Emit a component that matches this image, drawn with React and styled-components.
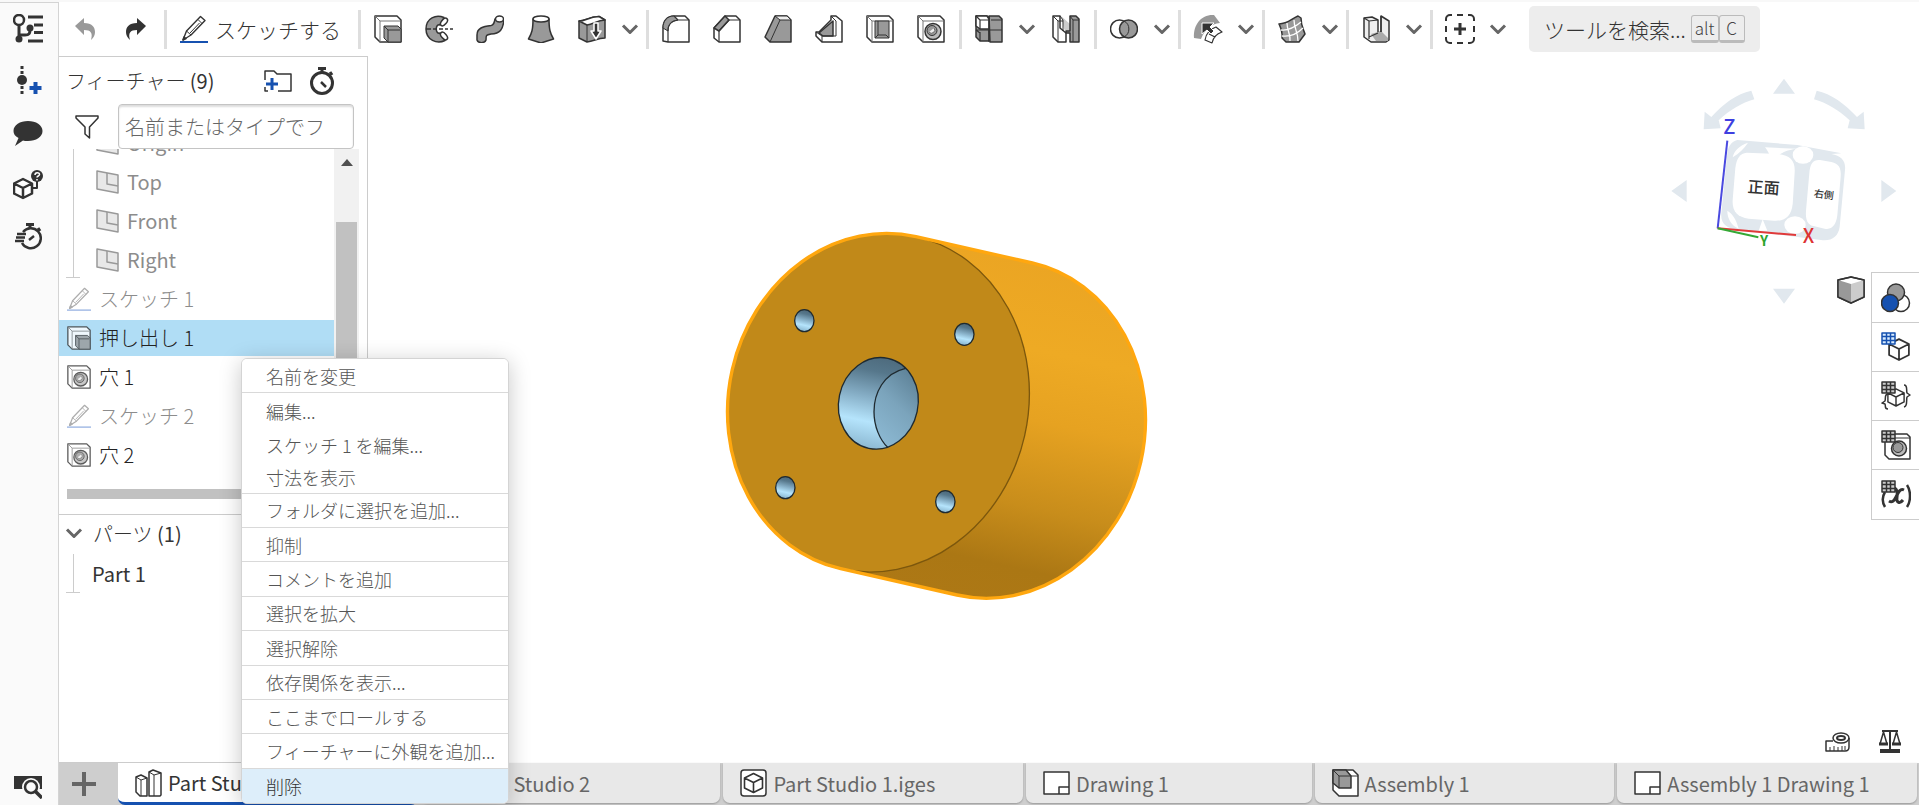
import React, { useState } from "react";
import styled, { createGlobalStyle, css } from "styled-components";

const GlobalStyle = createGlobalStyle`
    * {
        box-sizing: border-box;
    }
    body {
        margin: 0;
        background: #fff;
        color: #333;
        font-family: "Noto Sans CJK JP", "Noto Sans", sans-serif;
        font-weight: 300;
        font-size: 20px;
    }
    button, input {
        font: inherit;
        color: inherit;
    }
    button {
        padding: 0;
        border: 0;
        background: none;
        cursor: pointer;
    }
    svg {
        display: block;
        flex: none;
    }
`;

//LAYOUT
const Page = styled.div`
    position: relative;
    display: flex;
    height: 100vh;
    border-top: 2px solid #f8f8f8;
    overflow: hidden;
`;

const Rail = styled.nav`
    display: flex;
    flex-direction: column;
    flex: none;
    width: 59px;
    background: #fafafa;
    border-top: 1px solid #d4d4d4;
    border-right: 1px solid #d4d4d4;
`;

const RailButton = styled.button`
    display: flex;
    align-items: center;
    justify-content: center;
    height: 52px;
    padding-right: 2px;
    ${(props) => props.$last && css`
        margin-top: auto;
        height: 36px;
    `}
`;

const Main = styled.main`
    display: flex;
    flex-direction: column;
    flex: 1;
    min-width: 0;
`;

const Workspace = styled.div`
    display: flex;
    flex: 1;
    min-height: 0;
`;

//TOOLBAR
const Toolbar = styled.header`
    display: flex;
    align-items: center;
    flex: none;
    height: 54px;
`;

const Group = styled.div`
    display: flex;
    align-items: center;
    height: 39px;
    padding: 0 3px 0 1px;
    border-left: 3px solid #dedede;
`;

const ToolButton = styled.button`
    display: flex;
    align-items: center;
    justify-content: center;
    width: 51px;
    height: 39px;
`;

const CaretButton = styled(ToolButton)`
    width: 26px;
`;

const SketchButton = styled.button`
    display: flex;
    align-items: center;
    gap: 7px;
    width: 187px;
    padding-left: 12px;
    font-size: 21px;
    line-height: 36px;
    white-space: nowrap;
`;

const History = styled.div`
    display: flex;
    width: 105px;
`;

const SearchTools = styled.button`
    display: flex;
    align-items: center;
    gap: 5px;
    height: 46px;
    margin-left: 15px;
    padding: 0 15px;
    border-radius: 5px;
    background: #ededed;
    font-size: 21px;
    white-space: nowrap;
`;

const Keys = styled.span`
    display: flex;
`;

const Key = styled.kbd`
    min-width: 26px;
    padding: 0 3px;
    border: 1px solid #bbb;
    border-bottom-width: 3px;
    border-radius: 3px;
    font-family: inherit;
    font-size: 17px;
    line-height: 24px;
    text-align: center;
    color: #444;
`;

//FEATURE PANEL
const Panel = styled.aside`
    display: flex;
    flex-direction: column;
    flex: none;
    width: 309px;
    border: 1px solid #ccc;
    border-left: 0;
`;

const PanelHead = styled.div`
    display: flex;
    align-items: center;
    height: 47px;
    padding: 0 33px 0 7px;
`;

const PanelTitle = styled.h2`
    flex: 1;
    margin: 0;
    font-size: 20px;
    line-height: 30px;
    font-weight: 300;
`;

const Count = styled.span`
    font-weight: 400;
`;

const IconButton = styled.button`
    display: flex;
    margin-left: 18px;
`;

const FilterRow = styled.div`
    display: flex;
    align-items: center;
    gap: 19px;
    padding: 0 13px 0 16px;
`;

const FilterInput = styled.input`
    flex: 1;
    min-width: 0;
    height: 45px;
    padding: 0 30px 0 6px;
    border: 1px solid #c4c4c4;
    border-radius: 4px;
    background: #fff;
    box-shadow: inset 0 2px 2px #ddd;
    &::placeholder {
        color: #666;
        opacity: 1;
    }
`;

const ListArea = styled.div`
    display: flex;
    height: 340px;
    overflow: hidden;
`;

const FeatureList = styled.ul`
    display: flex;
    flex-direction: column;
    justify-content: flex-end;
    gap: 3px;
    flex: 1;
    margin: 0;
    padding: 0 0 16px;
    list-style: none;
`;

const Planes = styled.ul`
    display: flex;
    flex-direction: column;
    gap: 3px;
    margin: 0 0 0 7px;
    padding: 0;
    list-style: none;
    background:
        linear-gradient(#ccc, #ccc) 7px 0 / 1px 100% no-repeat,
        linear-gradient(#ccc, #ccc) 0 100% / 14px 1px no-repeat;
`;

const Feature = styled.button`
    display: flex;
    align-items: center;
    gap: 8px;
    width: 100%;
    height: 36px;
    padding-left: ${(props) => (props.$nested ? "30px" : "8px")};
    background: ${(props) => (props.$active ? "#b0ddf5" : "none")};
    color: ${(props) => (props.$dim ? "#8c8c8c" : "#222")};
    font-weight: ${(props) => (props.$nested ? 400 : 300)};
    line-height: 36px;
    text-align: left;
    white-space: nowrap;
`;

const ScrollTrack = styled.div`
    display: flex;
    flex-direction: column;
    align-items: center;
    gap: 56px;
    width: 25px;
    margin-right: 8px;
    padding-top: 10px;
    background: #f1f1f1;
`;

const ScrollThumb = styled.div`
    flex: 1;
    width: 21px;
    background: #c1c1c1;
`;

const RollbackBar = styled.div`
    height: 10px;
    margin: 0 33px 15px 8px;
    background: #c1c1c1;
`;

const Parts = styled.section`
    border-top: 1px solid #ccc;
    padding: 0 6px;
`;

const PartsToggle = styled.button`
    display: flex;
    align-items: center;
    gap: 10px;
    height: 36px;
    margin-bottom: 3px;
`;

const PartRow = styled.div`
    height: 39px;
    padding-left: 27px;
    font-weight: 400;
    line-height: 39px;
    background:
        linear-gradient(#ccc, #ccc) 8px 0 / 1px 100% no-repeat,
        linear-gradient(#ccc, #ccc) 1px 100% / 14px 1px no-repeat;
`;

//CANVAS
const Canvas = styled.section`
    position: relative;
    display: flex;
    flex-direction: column;
    align-items: flex-end;
    flex: 1;
    min-width: 0;
`;

const Model = styled.svg`
    position: absolute;
    left: 332px;
    top: 154px;
`;

const DockRow = styled.div`
    display: flex;
    align-items: flex-start;
    gap: 6px;
`;

const CubeButton = styled.button`
    padding-top: 4px;
`;

const Dock = styled.div`
    display: flex;
    flex-direction: column;
    width: 48px;
    border: 1px solid #ccc;
    border-width: 1px 0 0 1px;
    background: #fff;
`;

const DockButton = styled.button`
    display: flex;
    align-items: center;
    justify-content: center;
    height: 49px;
    border-bottom: 1px solid #ccc;
    &:last-child, &:first-child {
        height: 50px;
    }
`;

const Measure = styled.div`
    display: flex;
    align-items: center;
    gap: 11px;
    margin-top: auto;
    padding: 0 18px 10px 0;
`;

//TABS
const TabBar = styled.footer`
    display: flex;
    flex: none;
    gap: 3px;
    height: 42px;
    padding-right: 2px;
    background: #cecece;
`;

const AddTab = styled.button`
    display: flex;
    align-items: center;
    justify-content: center;
    width: 56px;
    padding-right: 6px;
`;

const Tab = styled.button`
    display: flex;
    align-items: center;
    gap: 6px;
    flex: ${(props) => props.$grow} 1 0;
    min-width: 0;
    height: 40px;
    padding-left: 17px;
    border-radius: 0 0 7px 7px;
    background: #e8e8e8;
    box-shadow: 0 1px 2px #999;
    color: #666;
    font-weight: 400;
    white-space: nowrap;
    ${(props) => props.$active && css`
        height: 42px;
        border-bottom: 3px solid #1651b0;
        background: #fff;
        color: #333;
        box-shadow: none;
    `}
`;

//CONTEXT MENU
const Menu = styled.div`
    position: absolute;
    left: 241px;
    top: 356px;
    bottom: 1px;
    width: 268px;
    display: flex;
    flex-direction: column;
    border: 1px solid #d4d4d4;
    border-radius: 6px;
    background: #fff;
    box-shadow: 0 4px 22px rgba(0, 0, 0, 0.22);
    overflow: hidden;
`;

const MenuItem = styled.button`
    flex: 1 0 ${(props) => (props.$tight ? "31px" : "34px")};
    padding-left: 24px;
    border-bottom: ${(props) => (props.$line ? "1px solid #d9d9d9" : "0")};
    background: ${(props) => (props.$active ? "#ddeefa" : "#fff")};
    color: ${(props) => (props.$active ? "#333" : "#555")};
    font-size: 18px;
    line-height: 30px;
    text-align: left;
    white-space: nowrap;
`;

//ICONS
const dark = "#333";
const mid = "#999";

function Icon({ size = 28, width, height, box, children }) {
    return (
        <svg
            width={width || size}
            height={height || size}
            viewBox={box || `0 0 ${width || size} ${height || size}`}
            fill="none"
            stroke={dark}
            strokeWidth="1.5"
            strokeLinejoin="round"
            aria-hidden="true"
        >
            {children}
        </svg>
    );
}

const Chevron = () => (
    <Icon width={18} height={12}>
        <path d="M2 2.5l7 7 7-7" stroke="#666" strokeWidth="3" />
    </Icon>
);

const Block = ({ children }) => (
    <>
        <path d="M1 1h22l4 4v22H6l-5-5z" fill="#fff" />
        <path d="M1 1l5 5v21M6 6h20" stroke="#777" strokeWidth="1" />
        {children}
    </>
);

const Extrude = () => (
    <Icon>
        <Block>
            <path d="M10 11h14l3 3v13H14l-4-4z" fill={mid} strokeWidth="1" />
            <path d="M10 11l4 4v12M14 15h12" strokeWidth="1" />
        </Block>
    </Icon>
);

const Hole = () => (
    <Icon>
        <Block>
            <circle cx="16" cy="16.500" r="8" fill="#bbb" />
            <circle cx="15" cy="15.500" r="5" fill={mid} strokeWidth="1" />
            <path d="M12 17a3 3 0 0 0 5-4" fill="#eee" stroke="#666" strokeWidth="1" />
        </Block>
    </Icon>
);

const Pencil = ({ color = dark, line = "#1651b0", size = 28 }) => (
    <Icon size={size} box="0 0 28 28">
        <path d="M3 25l3.500-9L20.500 1.500l4.500 4L11 20z" stroke={color} strokeWidth="1.400" />
        <path d="M6.500 16l4.500 4M18 4.500l4 4M10 18l9.500-10" stroke={color} strokeWidth="1" />
        <path d="M3 25l1-3 2 1.500z" fill={color} stroke={color} />
        <path d="M0 27h28" stroke={line} strokeWidth="2" />
    </Icon>
);

const Plane = () => (
    <Icon width={23} height={24}>
        <path d="M1 1l21 4v18L1 19z" fill="#e8e8e8" stroke="#999" />
        <path d="M11 3v11l11 2" stroke="#999" />
    </Icon>
);

const Revolve = () => (
    <Icon>
        <path d="M19 2.500C11-1 1 3 1 14s11 15.500 19 11.500L15 18c-5 1.500-5-9.500 0-8z" fill={mid} />
        <ellipse cx="19" cy="7" rx="2.500" ry="4.500" transform="rotate(40 19 7)" fill="#fff" />
        <ellipse cx="19" cy="21" rx="2.500" ry="4.500" transform="rotate(-40 19 21)" fill="#fff" />
        <path d="M1 14h5M8 14h4M14 14h4M20 14h3M25 14h3" />
    </Icon>
);

const Sweep = () => (
    <Icon>
        <path d="M19 4c-1 4-1 6-4 6.500C7 11.500 1 13 1 20v5c1 3.500 8 3.500 9 0 0-5 0-5 5-6 9-.500 12-4 13-15z" fill={mid} />
        <ellipse cx="23.500" cy="4" rx="4" ry="3" fill="#fff" />
    </Icon>
);

const Loft = () => (
    <Icon>
        <path d="M6 4c0 10-1 14-4.500 20L14 28l12.500-4C23 18 22 14 22 4z" fill={mid} />
        <ellipse cx="14" cy="4" rx="8" ry="3" fill="#fff" />
    </Icon>
);

const Thicken = () => (
    <Icon>
        <path d="M1 6c7 0 9-4 20-4.500l6 3.500v18c-8 0-11 3.500-18 4l-8-4z" fill={mid} />
        <path d="M1 6c7 0 9-4 20-4.500l6 3.500c-8 0-11 4-18 5z" fill="#fff" />
        <path d="M9 10v17" strokeWidth="1" />
        <path d="M16 8v8h-3l5 8 5-8h-3V8z" fill={dark} stroke="#fff" />
    </Icon>
);

const Fillet = () => (
    <Icon>
        <path d="M1 26V13C1 6 5 1 12 1h11l4 4v22H6z" fill="#fff" />
        <path d="M1 13C1 6 5 1 12 1l4 4C9 6 6 9 6 16z" fill={mid} strokeWidth="1" />
        <path d="M6 27V16C6 9 9 6 16 5h11M12 1l4 4" strokeWidth="1.200" />
    </Icon>
);

const Chamfer = () => (
    <Icon>
        <path d="M1 23V13L12 1h11l4 4v22H6z" fill="#fff" />
        <path d="M1 13L12 1l4 4L6 16z" fill={mid} />
        <path d="M6 27V16L16 5h11" strokeWidth="1.200" />
    </Icon>
);

const Draft = () => (
    <Icon>
        <path d="M1 22L11 1h12l4 4v22H6z" fill={mid} />
        <path d="M11 1l5 4h11l-4-4z" fill="#eee" strokeWidth="1" />
        <path d="M16 5L6 27" strokeWidth="1" />
    </Icon>
);

const Rib = () => (
    <Icon>
        <path d="M1 17h3L16 5V1h5l6 5v21H7l-6-6z" fill="#fff" />
        <path d="M4 18L18 6v15H8z" fill={mid} />
        <path d="M16 1l5 5v15H7l-6-4M7 21v6" strokeWidth="1" />
    </Icon>
);

const Shell = () => (
    <Icon>
        <Block>
            <path d="M9 6h14v17H9z" fill={mid} strokeWidth="1" />
            <path d="M9 23l3-3V6M23 23l-3-3h-8" strokeWidth="1" />
        </Block>
    </Icon>
);

const Pattern = () => (
    <Icon>
        <path d="M1 1h11l2 2v23H5l-4-4z" fill={mid} />
        <path d="M14 1h10l3 3v23H15z" fill={mid} />
        <path d="M1 1h11l2 3v10H5l-4-3z" fill="#fff" />
        <path d="M1 15h26M14 1v26M5 5v9M5 5h9M5 17v9M16 5h11M1 1l4 4M1 15l4 3" strokeWidth="1.200" />
    </Icon>
);

const Mirror = () => (
    <Icon>
        <path d="M9 1l9 8v11l-6-6z" fill="#ccc" stroke="none" />
        <path d="M1 1h7v12l6 5v9H6l-5-5z" fill="#fff" />
        <path d="M1 1l5 5v21M8 1l3 4v11M6 6h5" strokeWidth="1" />
        <path d="M18 1h6l3 3v23h-9v-9h-4v-2h4z" fill={mid} />
        <path d="M18 1l3 4v22M21 5h6" strokeWidth="1" />
    </Icon>
);

const Boolean2 = () => (
    <Icon>
        <circle cx="9.500" cy="14" r="9" fill="#fff" />
        <circle cx="18.500" cy="14" r="9" fill={mid} />
        <path d="M14 6a9 9 0 0 1 0 16" strokeWidth="1" />
    </Icon>
);

const MoveFace = () => (
    <Icon size={30}>
        <path d="M1 24C0 10 9 0 21 1l6 8c-9 1-15 6-19 16z" fill={mid} stroke="none" />
        <path d="M23 13l6 5c-6 2-9 6-10 11l-7-3c1-6 5-11 11-13zM16 20l6 3" fill="#fff" strokeWidth="1.200" />
        <path d="M9 9h12l-4 4 4 4-3 3-4-4-5 4z" fill={dark} stroke="#fff" strokeWidth="1" />
    </Icon>
);

const Surface = () => (
    <Icon>
        <path d="M1 9c9 0 12-5 19-8l3 2c0 8 2 10 4 16l-6 8H8l-4-4c1-7-1-10-3-14z" fill={mid} />
        <path d="M3 15c8 1 14-3 20-8M4 21c8 1 15-2 21-8M9 8c0 8 4 12 3 18M16 5c0 8 4 12 4 21" stroke="#fff" strokeWidth="1.300" />
    </Icon>
);

const SheetMetal = () => (
    <Icon>
        <path d="M2 3l8-1 6 3v13l3-1V1l8 5v19l-3 2H9l-7-5z" fill="#eee" />
        <path d="M9 19l7-2h4l6 6v3H14z" fill="#aaa" stroke="none" />
        <path d="M2 3l5 3v18M7 6l9-1M7 22l9-4M19 1v16" strokeWidth="1.200" />
    </Icon>
);

const AddCustom = () => (
    <Icon size={30}>
        <path d="M1 7V5a4 4 0 0 1 4-4h2M12 1h6M23 1h2a4 4 0 0 1 4 4v2M29 12v6M29 23v2a4 4 0 0 1-4 4h-2M18 29h-6M7 29H5a4 4 0 0 1-4-4v-2M1 18v-6" strokeWidth="2" />
        <path d="M15 9v12M9 15h12" strokeWidth="3" />
    </Icon>
);

const Undo = ({ flip }) => (
    <Icon width={20} height={22}>
        <path
            d="M0 8l9-8v5c8 0 11 4 11 9 0 3-1 5-4 8 2-7 0-10-7-10v5z"
            transform={flip ? "translate(20 0) scale(-1 1)" : undefined}
            fill={flip ? dark : mid}
            stroke="none"
        />
    </Icon>
);

const Stopwatch = ({ lines }) => (
    <Icon width={lines ? 28 : 24} height={28} box={lines ? "-4 0 28 28" : "0 0 24 28"}>
        {lines ? (
            <path d="M5 9a10 10 0 1 1-1 11M-1 11h9M-2 14.500h9M-3 18h9" strokeWidth="2.500" />
        ) : (
            <circle cx="12" cy="16" r="10.500" strokeWidth="3" />
        )}
        <path d="M8 1.500h8M12 2v4M20 5l2 3" strokeWidth="3" />
        <path d={lines ? "M11 17l5-4" : "M11 15l5 5"} strokeWidth="2.500" />
    </Icon>
);

const VersionTree = () => (
    <Icon size={30}>
        <circle cx="6" cy="6" r="5" strokeWidth="2.500" />
        <path d="M6 11v14M6 21h6c4 0 5-1 5-6" strokeWidth="3" />
        <circle cx="6" cy="25" r="3.500" fill={dark} stroke="none" />
        <circle cx="17" cy="14" r="3.500" fill={dark} stroke="none" />
        <path d="M15 3h15M21 11h9M21 18.500h9M15 27h15" strokeWidth="3" />
    </Icon>
);

const AddVersion = () => (
    <Icon width={30} height={30}>
        <path d="M9 0v28" strokeWidth="3" strokeDasharray="3 2" />
        <circle cx="9" cy="14" r="5" fill={dark} stroke="none" />
        <path d="M22.500 16v12M16.500 22h12" stroke="#1651b0" strokeWidth="4" />
    </Icon>
);

const Comment = () => (
    <Icon width={30} height={28}>
        <path d="M15 2c8 0 14.500 4 14.500 10S23 22 15 22c-2 0-4 0-5-.500L2 27l3.500-8C2 17 .500 15 .500 12 .500 6 7 2 15 2z" fill={dark} stroke="none" />
    </Icon>
);

const CubeShape = ({ x = 0, y = 0, s = 1, sw = 2 }) => (
    <path
        d="M10 1l9 4.500v10L10 20l-9-4.500v-10zM1 5.500l9 4.500 9-4.500M10 10v10"
        transform={`translate(${x} ${y}) scale(${s})`}
        fill="#fff"
        strokeWidth={sw}
    />
);

const CubeHelp = () => (
    <Icon size={30}>
        <CubeShape x={0} y={8} sw={2.5} />
        <path d="M20 18h4v-8" strokeWidth="2" />
        <circle cx="24" cy="6" r="6" fill={dark} stroke="none" />
        <path d="M22 5c0-3 4.500-3 4.500-.500 0 1.500-2.500 1.500-2.500 3M24 9v1.500" stroke="#fff" />
    </Icon>
);

const TableSearch = () => (
    <Icon width={28} height={24}>
        <path d="M0 1h28v13H0z" fill={dark} stroke="none" />
        <circle cx="17" cy="12" r="9" fill="#fafafa" stroke="none" />
        <circle cx="17" cy="12" r="6" strokeWidth="2.500" />
        <path d="M21 16l7 7" strokeWidth="3.500" />
    </Icon>
);

const FolderPlus = () => (
    <Icon width={28} height={22}>
        <path d="M1 10V1h9l3 3h14v17H14M1 17v4h3" />
        <path d="M8 8v12M2 14h12" stroke="#1651b0" strokeWidth="3" />
    </Icon>
);

const Funnel = () => (
    <Icon width={24} height={24}>
        <path d="M1 1h22v2l-8.500 9v11l-4.500-4v-7L1 3z" />
    </Icon>
);

const PartStudioIcon = () => (
    <Icon width={27} height={28}>
        <path d="M1 8l5-2 6 3v18H5l-4-4zM14 3l4-2 8 3v22l-1 1H14z" fill="#fff" />
        <path d="M1 8l5 3 6-2M6 11v16M14 3l5 3 7-2M19 6v21" strokeWidth="1" />
    </Icon>
);

const ImportIcon = () => (
    <Icon width={27} height={28}>
        <rect x="1" y="1" width="25" height="26" rx="3" fill="#fff" />
        <CubeShape x={3.5} y={3.5} sw={1.6} />
    </Icon>
);

const DrawingIcon = () => (
    <Icon width={27} height={24}>
        <path d="M1 1h25v22H1zM16 23v-7h10" fill="#fff" />
    </Icon>
);

const AssemblyIcon = () => (
    <Icon width={27} height={28}>
        <path d="M1 1h20l5 5v21H7l-6-6z" fill="#fff" />
        <path d="M1 1h13l5 6v12H7l-6-5z" fill={mid} />
        <path d="M1 1l6 6v12M7 7h19" strokeWidth="1" />
    </Icon>
);

const TinyTable = ({ blue }) => (
    <>
        <path
            d="M1 1h13v11H1z"
            fill={blue ? "#d8ecff" : "#ccc"}
            stroke={blue ? "#1651b0" : dark}
        />
        <path d="M1 4.500h13M1 8.500h13M5.500 1v11M9.500 1v11" stroke={blue ? "#1651b0" : dark} />
    </>
);

const Appearance = () => (
    <Icon size={30}>
        <circle cx="20" cy="20" r="8.500" fill="#fff" />
        <circle cx="15" cy="9.500" r="8.500" fill={mid} />
        <circle cx="9" cy="20" r="8.500" fill="#1651b0" />
    </Icon>
);

const DockCube = () => (
    <Icon size={30}>
        <CubeShape x={7} y={6} s={1.1} sw={1.6} />
        <TinyTable blue />
    </Icon>
);

const DockBraces = () => (
    <Icon size={30}>
        <CubeShape x={6} y={7} s={0.9} sw={1.6} />
        <path d="M7 13c-4 0-2 5-3 7l-3 2 3 1c1 2-1 5 3 5M23 4c4 0 2 5 3 8l3 2-3 2c-1 3 1 9-3 10" />
        <TinyTable />
    </Icon>
);

const DockHole = () => (
    <Icon size={30}>
        <path d="M4 4h22l3 3v22H8l-4-4z" fill="#fff" />
        <path d="M5 8h24" strokeWidth="1" />
        <circle cx="18" cy="18.500" r="7.500" fill="#bbb" />
        <circle cx="17" cy="17.500" r="5" fill={mid} strokeWidth="1" />
        <TinyTable />
    </Icon>
);

const DockVariable = () => (
    <Icon size={30}>
        <path d="M4 12c-3 5-3 10 0 15M26 5c4 6 4 16 0 22" strokeWidth="2.500" />
        <path d="M10 9c5-3 7 2 6 8s3 7 6 3M23 10c-4-2-6 3-8 7s-4 6-7 4" strokeWidth="3" />
        <TinyTable />
    </Icon>
);

const ShadedCube = () => (
    <Icon size={28}>
        <path d="M1 4l13-3 13 3v17l-13 6L1 21z" fill="#fff" />
        <path d="M1 4l13 4v19L1 21z" fill={mid} stroke="none" />
        <path d="M27 4L14 8v19l13-6z" fill="#ccc" stroke="none" />
        <path d="M1 4l13-3 13 3v17l-13 6L1 21z" />
    </Icon>
);

const Tape = () => (
    <Icon width={25} height={20}>
        <path d="M8 9H1v10h19c2 0 4-1 4-4V6" />
        <ellipse cx="16" cy="6" rx="8" ry="5" />
        <ellipse cx="16" cy="6" rx="4" ry="2" strokeWidth="2" />
        <path d="M5 19v-4M9 19v-5M13 19v-4M17 19v-5M20 18v-4" strokeWidth="1" />
    </Icon>
);

const Scales = () => (
    <Icon width={22} height={23}>
        <path d="M3 1h16M11 1v19" strokeWidth="2" />
        <path d="M4.500 2L1 14h7zM17.500 2L14 14h7z" />
        <path d="M0 14h9M13 14h9" strokeWidth="3" />
        <path d="M1 21h20" strokeWidth="4" />
    </Icon>
);

//MODEL
const mountingHoles = [[313, 332], [793, 373], [256, 833], [736, 875]];
const outline = "M648 80L997 159A440 500 12.800 0 1 771 1155L422 1076A440 500 12.800 0 1 648 80Z";

function Cylinder() {
    return (
        <Model width="480" height="410" viewBox="0 0 1440 1230" role="img" aria-label="Part 1">
            <defs>
                <linearGradient id="side" gradientUnits="userSpaceOnUse" x1="980" y1="150" x2="760" y2="1160">
                    <stop offset="0" stopColor="#eba523" />
                    <stop offset="0.25" stopColor="#eeaa24" />
                    <stop offset="0.45" stopColor="#e6a221" />
                    <stop offset="0.7" stopColor="#c88d1b" />
                    <stop offset="0.88" stopColor="#ab7714" />
                    <stop offset="1" stopColor="#ad7815" />
                </linearGradient>
                <linearGradient id="bore" x1="0.6" y1="0" x2="0.4" y2="1">
                    <stop offset="0" stopColor="#4b6779" />
                    <stop offset="0.2" stopColor="#56778b" />
                    <stop offset="0.45" stopColor="#84acc4" />
                    <stop offset="0.7" stopColor="#b5e4fc" />
                    <stop offset="1" stopColor="#86b2cc" />
                </linearGradient>
                <linearGradient id="boreEnd" x1="0.8" y1="0" x2="0.2" y2="1">
                    <stop offset="0" stopColor="#587b90" />
                    <stop offset="0.5" stopColor="#7ba4bc" />
                    <stop offset="1" stopColor="#8dbad4" />
                </linearGradient>
                <clipPath id="boreClip">
                    <ellipse cx="535" cy="580" rx="119" ry="138" transform="rotate(12 535 580)" />
                </clipPath>
            </defs>
            <path d={outline} fill="url(#side)" />
            <ellipse cx="535" cy="578" rx="450" ry="511" transform="rotate(12.8 535 578)" fill="#c18919" stroke="#7c570d" strokeWidth="4" />
            <path d={outline} fill="none" stroke="#ffa70f" strokeWidth="10" />
            {mountingHoles.map(([x, y]) => (
                <ellipse key={x} cx={x} cy={y} rx="29" ry="33" fill="url(#bore)" stroke="#1f2a30" strokeWidth="4" />
            ))}
            <g clipPath="url(#boreClip)">
                <path d="M400 430h280v300H400z" fill="url(#bore)" />
                <path d="M617 475C550 490 522 550 522 605C522 650 540 690 563 712L680 720V470Z" fill="url(#boreEnd)" stroke="#1f2a30" strokeWidth="4" />
            </g>
            <ellipse cx="535" cy="580" rx="119" ry="138" transform="rotate(12 535 580)" fill="none" stroke="#1f2a30" strokeWidth="4" />
        </Model>
    );
}

const CubeSvg = styled.svg`
    margin-top: 4px;
    overflow: visible;
    font-family: "Noto Sans CJK JP", sans-serif;
    font-weight: 500;
`;

function ViewCube() {
    return (
        <CubeSvg width="269" height="212" viewBox="0 0 807 636" role="img" aria-label="View cube">
            <g fill="#e1e8ee">
                <path d="M369 101l33-45 33 45zM369 686l33 45 33-45zM110 360v66l-46-33zM694 360v66l45-33z" />
                <path d="M304 92l9 26C275 128 240 150 206 181l6 24-51 3 3-53 20 16C220 130 260 102 304 92z" />
                <path d="M500 92l-8 26c38 10 73 32 107 63l-6 24 51 3-3-53-20 16C584 130 544 102 500 92z" />
                <path d="M262 240l180 15 132 25-30 2c30 6 44 20 41 48l-16 170c-4 30-24 44-56 40L260 508c-28-2-50-16-46-50l18-178c2-20 12-36 30-40z" />
            </g>
            <g fill="#fff">
                <path d="M290 278l96 4c34 4 50 20 48 54l-6 96c-4 36-22 52-56 50l-76-6c-34-4-50-22-48-56l8-96c4-30 14-44 34-46z" />
                <path d="M510 300l34 6c22 4 30 18 28 44l-10 116c-4 30-16 44-38 40l-34-8c-18-4-24-20-22-46l10-112c2-30 12-42 32-40z" />
                <ellipse cx="459" cy="285" rx="31" ry="26" />
                <ellipse cx="435" cy="495" rx="32" ry="26" />
                <path d="M248 292c4-18 18-34 46-44-12 18-26 32-46 44zM232 452c14 8 26 24 34 54-22-10-34-30-34-54zM326 512l12-34 14 34zM345 262l95 4c-30 4-40 10-52 18h-30c-4-10-8-16-13-22z" />
            </g>
            <path d="M232 242L203 505" stroke="#4a4ae0" strokeWidth="6" />
            <path d="M203 505l235 20" stroke="#e03a3a" strokeWidth="6" />
            <path d="M203 505l122 27" stroke="#35a835" strokeWidth="6" />
            <text x="220" y="221" fontSize="60" fill="#3f3fe0">Z</text>
            <text x="458" y="549" fontSize="58" fill="#dd3333">X</text>
            <text x="330" y="558" fontSize="42" fontWeight="700" fill="#2da52d">Y</text>
            <text x="293" y="400" fontSize="48" fill="#333" transform="rotate(4 340 380)">正面</text>
            <text x="492" y="414" fontSize="30" fill="#333" transform="rotate(8 520 400)">右側</text>
        </CubeSvg>
    );
}

//DATA
const toolGroups = [
    [["Extrude", Extrude], ["Revolve", Revolve], ["Sweep", Sweep], ["Loft", Loft], ["Thicken", Thicken], "more"],
    [["Fillet", Fillet], ["Chamfer", Chamfer], ["Draft", Draft], ["Rib", Rib], ["Shell", Shell], ["Hole", Hole]],
    [["Pattern", Pattern], "more", ["Mirror", Mirror]],
    [["Boolean", Boolean2], "more"],
    [["Move face", MoveFace], "more"],
    [["Surface", Surface], "more"],
    [["Sheet metal", SheetMetal], "more"],
    [["Custom features", AddCustom], "more"],
];

const railItems = [
    ["Versions", <VersionTree />],
    ["Create version", <AddVersion />],
    ["Comments", <Comment />],
    ["Help", <CubeHelp />],
    ["Performance", <Stopwatch lines />],
];

const features = [
    { name: "スケッチ 1", type: "sketch" },
    { name: "押し出し 1", type: "extrude" },
    { name: "穴 1", type: "hole" },
    { name: "スケッチ 2", type: "sketch" },
    { name: "穴 2", type: "hole" },
];

const menuItems = [
    { label: "名前を変更", line: true },
    { label: "編集..." },
    { label: "スケッチ 1 を編集..." },
    { label: "寸法を表示", line: true, tight: true },
    { label: "フォルダに選択を追加...", line: true },
    { label: "抑制", line: true },
    { label: "コメントを追加", line: true },
    { label: "選択を拡大", line: true },
    { label: "選択解除", line: true },
    { label: "依存関係を表示...", line: true },
    { label: "ここまでロールする", line: true },
    { label: "フィーチャーに外観を追加...", line: true },
    { label: "削除", active: true },
];

const tabs = [
    { name: "Part Studio 1", icon: <PartStudioIcon />, grow: 20 },
    { name: "Part Studio 2", icon: <PartStudioIcon />, grow: 20 },
    { name: "Part Studio 1.iges", icon: <ImportIcon />, grow: 20 },
    { name: "Drawing 1", icon: <DrawingIcon />, grow: 19 },
    { name: "Assembly 1", icon: <AssemblyIcon />, grow: 20 },
    { name: "Assembly 1 Drawing 1", icon: <DrawingIcon />, grow: 20 },
];

const dockItems = [
    ["Appearance", <Appearance />],
    ["Configurations", <DockCube />],
    ["Custom table", <DockBraces />],
    ["Hole table", <DockHole />],
    ["Variables", <DockVariable />],
];

const FeatureSvg = styled.span`
    display: flex;
    opacity: 0.8;
    svg {
        width: 24px;
        height: 24px;
    }
`;

function FeatureIcon({ type }) {
    return (
        <FeatureSvg>
            {type === "sketch" && <Pencil color="#999" line="#9db6e4" />}
            {type === "extrude" && <Extrude />}
            {type === "hole" && <Hole />}
        </FeatureSvg>
    );
}

function TopToolbar() {
    return (
        <Toolbar>
            <History>
                <ToolButton aria-label="Undo"><Undo /></ToolButton>
                <ToolButton aria-label="Redo"><Undo flip /></ToolButton>
            </History>
            <Group>
                <SketchButton><Pencil />スケッチする</SketchButton>
            </Group>
            {toolGroups.map((group, i) => (
                <Group key={i}>
                    {group.map((tool, j) => {
                        if (tool === "more") {
                            return <CaretButton key={j} aria-label="More tools"><Chevron /></CaretButton>;
                        }
                        const [name, ToolIcon] = tool;
                        return <ToolButton key={j} aria-label={name}><ToolIcon /></ToolButton>;
                    })}
                </Group>
            ))}
            <SearchTools>
                ツールを検索...
                <Keys><Key>alt</Key><Key>C</Key></Keys>
            </SearchTools>
        </Toolbar>
    );
}

function FeaturePanel() {
    const [selected, setSelected] = useState("押し出し 1");
    return (
        <Panel>
            <PanelHead>
                <PanelTitle>フィーチャー <Count>(9)</Count></PanelTitle>
                <IconButton aria-label="Add folder"><FolderPlus /></IconButton>
                <IconButton aria-label="Regeneration times"><Stopwatch /></IconButton>
            </PanelHead>
            <FilterRow>
                <Funnel />
                <FilterInput type="text" aria-label="Filter" placeholder="名前またはタイプでフィルター" />
            </FilterRow>
            <ListArea>
                <FeatureList>
                    <li>
                        <Planes>
                            {["Origin", "Top", "Front", "Right"].map((name) => (
                                <li key={name}>
                                    <Feature $nested $dim>
                                        <Plane />
                                        {name}
                                    </Feature>
                                </li>
                            ))}
                        </Planes>
                    </li>
                    {features.map(({ name, type }) => (
                        <li key={name}>
                            <Feature
                                $dim={type === "sketch"}
                                $active={selected === name}
                                onClick={() => setSelected(name)}
                            >
                                <FeatureIcon type={type} />
                                {name}
                            </Feature>
                        </li>
                    ))}
                </FeatureList>
                <ScrollTrack>
                    <Icon width={12} height={7}>
                        <path d="M0 7l6-7 6 7z" fill="#505050" stroke="none" />
                    </Icon>
                    <ScrollThumb />
                </ScrollTrack>
            </ListArea>
            <RollbackBar />
            <Parts>
                <PartsToggle><Chevron /><span>パーツ <Count>(1)</Count></span></PartsToggle>
                <PartRow>Part 1</PartRow>
            </Parts>
        </Panel>
    );
}

function App() {
    return (
        <>
            <GlobalStyle />
            <Page>
                <Rail>
                    {railItems.map(([name, icon]) => (
                        <RailButton key={name} aria-label={name}>{icon}</RailButton>
                    ))}
                    <RailButton $last aria-label="Search tables"><TableSearch /></RailButton>
                </Rail>
                <Main>
                    <TopToolbar />
                    <Workspace>
                        <FeaturePanel />
                        <Canvas>
                            <Cylinder />
                            <ViewCube />
                            <DockRow>
                                <CubeButton aria-label="View options"><ShadedCube /></CubeButton>
                                <Dock>
                                    {dockItems.map(([name, icon]) => (
                                        <DockButton key={name} aria-label={name}>{icon}</DockButton>
                                    ))}
                                </Dock>
                            </DockRow>
                            <Measure>
                                <IconButton aria-label="Measure"><Tape /></IconButton>
                                <IconButton aria-label="Mass properties"><Scales /></IconButton>
                            </Measure>
                        </Canvas>
                    </Workspace>
                    <TabBar>
                        <AddTab aria-label="Add tab">
                            <Icon size={24}>
                                <path d="M12 0v24M0 12h24" stroke="#666" strokeWidth="4" />
                            </Icon>
                        </AddTab>
                        {tabs.map(({ name, icon, grow }, i) => (
                            <Tab key={name} $grow={grow} $active={i === 0}>{icon}{name}</Tab>
                        ))}
                    </TabBar>
                </Main>
                <Menu role="menu">
                    {menuItems.map(({ label, line, tight, active }) => (
                        <MenuItem key={label} role="menuitem" $line={line} $tight={tight} $active={active}>
                            {label}
                        </MenuItem>
                    ))}
                </Menu>
            </Page>
        </>
    );
}

export default App;
